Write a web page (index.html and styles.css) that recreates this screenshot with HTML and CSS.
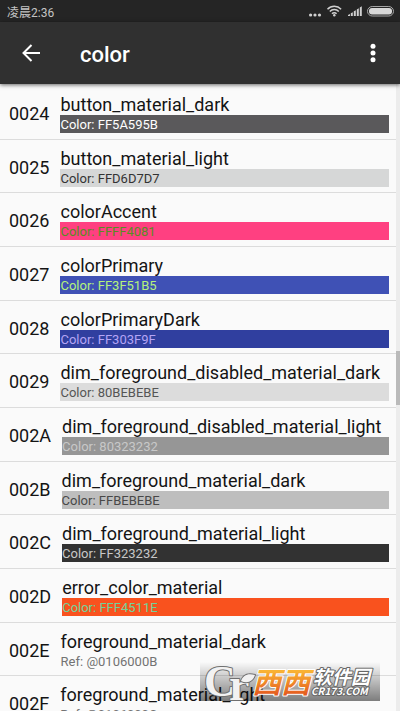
FILE: index.html
```html
<!DOCTYPE html>
<html lang="en">
    <head>
        <meta charset="utf-8">
        <meta name="viewport" content="width=device-width, initial-scale=1.0">
        <title>color</title>
        <link rel="stylesheet" href="styles.css">
    </head>
    <body>
        <div class="status">
            <span class="clock">凌晨2:36</span>
            <svg width="86" height="12" viewBox="0 0 86 12" fill="#d0d0d0">
                <circle cx="1.600" cy="10" r="1.600"/>
                <circle cx="6" cy="10" r="1.600"/>
                <circle cx="10.500" cy="10" r="1.600"/>
                <g fill="none" stroke="#d0d0d0" stroke-width="1.500">
                    <path d="M18.500 4.200a9.500 9.500 0 0 1 13.600 0"/>
                    <path d="M20.800 6.500a6.200 6.200 0 0 1 9 0"/>
                    <path d="M23 8.700a3.200 3.200 0 0 1 4.600 0"/>
                </g>
                <circle cx="25.300" cy="10.200" r="1.200"/>
                <path d="M39 11v-1l2-1v2zM41.800 11V8.300l2-1V11zM44.800 11V6.300l2-1V11zM47.800 11V4.500l2-1.300V11zM50.800 11V2.500l2-1.300V11z"/>
                <rect x="58.500" y="1.500" width="26" height="9.500" rx="4.700" fill="none" stroke="#a5a5a5"/>
                <rect x="60" y="3" width="23" height="6.500" rx="3" fill="#d8d8d8"/>
            </svg>
        </div>
        <header class="toolbar">
            <button class="icon-btn" aria-label="Back">
                <svg width="18" height="18" viewBox="0 0 18 18" fill="none" stroke="#fff" stroke-width="2">
                    <path d="M18 9H2M9.500 1L1.500 9l8 8"/>
                </svg>
            </button>
            <h1>color</h1>
            <button class="icon-btn" aria-label="More options">
                <svg width="6" height="20" viewBox="0 0 6 20" fill="#fff">
                    <circle cx="3" cy="3.300" r="2.500"/>
                    <circle cx="3" cy="10" r="2.500"/>
                    <circle cx="3" cy="16.700" r="2.500"/>
                </svg>
            </button>
        </header>
        <main class="content">
            <ul class="list">
                <li><span class="id">0024</span><div class="entry"><p class="name">button_material_dark</p><p class="value button-dark">Color: FF5A595B</p></div></li>
                <li><span class="id">0025</span><div class="entry"><p class="name">button_material_light</p><p class="value button-light">Color: FFD6D7D7</p></div></li>
                <li><span class="id">0026</span><div class="entry"><p class="name">colorAccent</p><p class="value accent">Color: FFFF4081</p></div></li>
                <li><span class="id">0027</span><div class="entry"><p class="name">colorPrimary</p><p class="value primary">Color: FF3F51B5</p></div></li>
                <li><span class="id">0028</span><div class="entry"><p class="name">colorPrimaryDark</p><p class="value primary-dark">Color: FF303F9F</p></div></li>
                <li><span class="id">0029</span><div class="entry"><p class="name">dim_foreground_disabled_material_dark</p><p class="value disabled-dark">Color: 80BEBEBE</p></div></li>
                <li><span class="id">002A</span><div class="entry"><p class="name">dim_foreground_disabled_material_light</p><p class="value disabled-light">Color: 80323232</p></div></li>
                <li><span class="id">002B</span><div class="entry"><p class="name">dim_foreground_material_dark</p><p class="value dim-dark">Color: FFBEBEBE</p></div></li>
                <li><span class="id">002C</span><div class="entry"><p class="name">dim_foreground_material_light</p><p class="value dim-light">Color: FF323232</p></div></li>
                <li><span class="id">002D</span><div class="entry"><p class="name">error_color_material</p><p class="value error">Color: FFF4511E</p></div></li>
                <li><span class="id">002E</span><div class="entry"><p class="name">foreground_material_dark</p><p class="value">Ref: @0106000B</p></div></li>
                <li><span class="id">002F</span><div class="entry"><p class="name">foreground_material_light</p><p class="value">Ref: @0106000C</p></div></li>
            </ul>
            <div class="track"><div class="thumb"></div></div>
        </main>
        <div class="watermark">
            <svg width="180" height="44" viewBox="0 0 180 44">
                <defs>
                    <linearGradient id="orange" x1="0" y1="0" x2="0" y2="1">
                        <stop offset="0.300" stop-color="#f9b233"/>
                        <stop offset="0.900" stop-color="#e2521d"/>
                    </linearGradient>
                </defs>
                <g class="wm-logo">
                    <text x="4" y="34" font-size="44">C</text>
                    <text x="29" y="38" font-size="46">r</text>
                    <path d="M41 19c2-6 7-8 14-6-2 6-7 9-14 6z"/>
                </g>
                <text class="wm-main" x="52" y="31" font-size="29">西西</text>
                <text class="wm-sub" x="113" y="22" font-size="19">软件园</text>
                <text class="wm-url" x="111" y="33" font-size="10">CR173.COM</text>
            </svg>
        </div>
    </body>
</html>
```
FILE: styles.css
```css
* {
    box-sizing: border-box;
}
body {
    margin: 0;
    height: 100vh;
    display: flex;
    flex-direction: column;
    overflow: hidden;
    background: #fafafa;
    color: #141414;
    font-family: Roboto, "Noto Sans CJK SC", sans-serif;
}
h1, p, ul {
    margin: 0;
    padding: 0;
}
.status {
    flex: none;
    display: flex;
    justify-content: space-between;
    align-items: center;
    height: 22px;
    padding: 0 5px 0 7px;
    background: #252525;
    color: #c4c4c4;
    font-size: 12px;
}
.toolbar {
    flex: none;
    display: flex;
    align-items: center;
    height: 62px;
    padding: 0 16px 0 20px;
    background: #303030;
    color: #fff;
    box-shadow: 0 1px 4px rgba(0, 0, 0, 0.6);
    z-index: 1;
}
.toolbar h1 {
    flex: 1;
    padding: 2px 0 0 38px;
    font-size: 22px;
    font-weight: 500;
}
.icon-btn {
    display: flex;
    justify-content: center;
    min-width: 22px;
    padding: 0;
    border: 0;
    background: none;
}
.content {
    flex: 1;
    display: flex;
    min-height: 0;
    position: relative;
}
.list {
    flex: 1;
    min-width: 0;
    padding-top: 2px;
    list-style: none;
}
.list li {
    display: flex;
    align-items: center;
    gap: 11px;
    height: 54px;
    padding: 2px 7px 0 9px;
    border-bottom: 1px solid #dcdcdc;
}
.list li:nth-child(3n + 2) {
    height: 53px;
}
.id {
    font-size: 18px;
}
.entry {
    flex: 1;
    min-width: 0;
}
.name {
    font-size: 18px;
    line-height: 21px;
    white-space: nowrap;
}
.value {
    height: 18px;
    font-size: 13px;
    line-height: 20px;
    color: #737373;
}
.button-dark {
    background: #5a595b;
    color: #fff;
}
.button-light {
    background: #d6d7d7;
    color: #333;
}
.accent {
    background: #ff4081;
    color: #5a8c24;
}
.primary {
    background: #3f51b5;
    color: #b5f37c;
}
.primary-dark {
    background: #303f9f;
    color: #b5a5f5;
}
.disabled-dark {
    background: #dcdcdc;
    color: #555;
}
.disabled-light {
    background: #969696;
    color: #c8c8c8;
}
.dim-dark {
    background: #bebebe;
    color: #484848;
}
.dim-light {
    background: #323232;
    color: #c8c8c8;
}
.error {
    background: #f9521e;
    color: #72d29b;
}
.track {
    flex: none;
    width: 4px;
    background: #ececec;
}
.thumb {
    position: absolute;
    top: 267px;
    right: 0;
    width: 4px;
    height: 54px;
    background: #bababa;
}
.watermark {
    position: absolute;
    right: 20px;
    bottom: 10px;
    height: 39px;
    background: linear-gradient(rgba(0, 0, 0, 0), rgba(0, 0, 0, 0.5));
    z-index: 2;
}
.watermark text {
    font-weight: bold;
}
.watermark text, .watermark path {
    paint-order: stroke;
    stroke-linejoin: round;
}
.wm-logo {
    font-family: "Liberation Serif", serif;
    fill: #f2f2f2;
    stroke: #707070;
    stroke-width: 2px;
}
.wm-main {
    font-family: "Noto Sans CJK SC", sans-serif;
    font-style: italic;
    fill: url(#orange);
    stroke: #fff;
    stroke-width: 2px;
}
.wm-sub, .wm-url {
    font-family: "Noto Sans CJK SC", sans-serif;
    font-style: italic;
    fill: #fff;
    stroke: #666;
    stroke-width: 2px;
}
```
